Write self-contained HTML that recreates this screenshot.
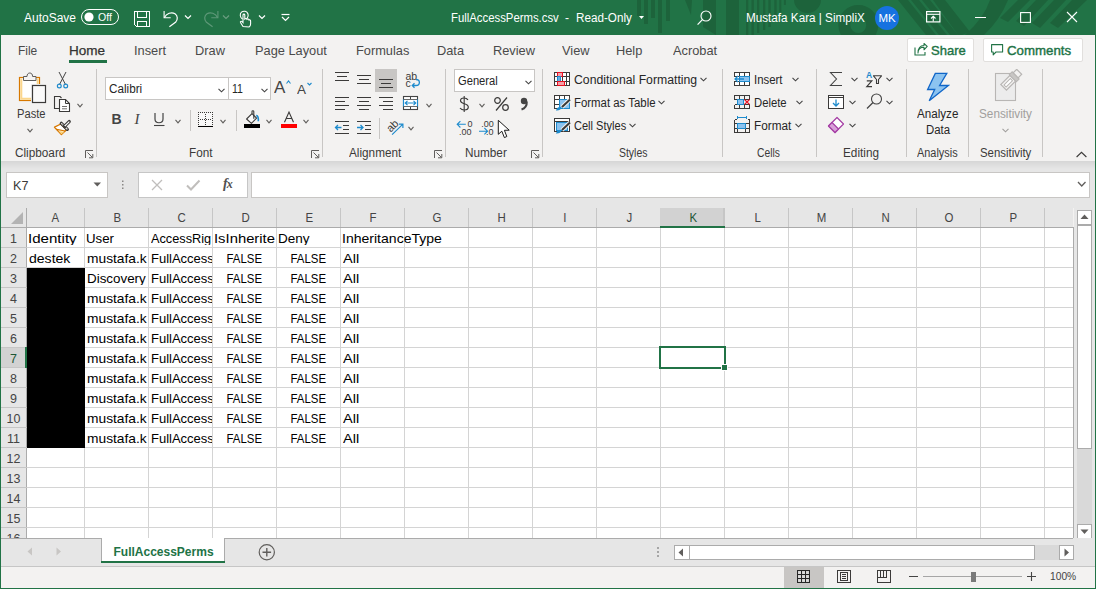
<!DOCTYPE html>
<html><head><meta charset="utf-8"><style>
html,body{margin:0;padding:0;}
body{width:1096px;height:589px;overflow:hidden;position:relative;background:#f3f2f1;font-family:"Liberation Sans", sans-serif;}
svg{display:block;}
</style></head><body>
<svg style="position:absolute;left:0px;top:0px;" width="1096" height="35" viewBox="0 0 1096 35">
<rect x="0" y="0" width="1096" height="35" fill="#217346"/>
<g fill="#1d633b">
<rect x="637" y="0" width="4" height="16"/>
<rect x="644" y="0" width="4" height="24"/>
<rect x="651" y="0" width="4" height="18"/>
<rect x="658" y="0" width="4" height="33"/>
<rect x="666" y="0" width="4" height="21"/>
<polygon points="685,0 692,0 691,15"/>
<polygon points="703,0 716,0 716,35 703,27"/>
<rect x="726" y="0" width="13" height="35"/>
<rect x="746" y="0" width="2.3" height="35"/>
<rect x="751.5" y="0" width="2.3" height="35"/>
<rect x="757" y="0" width="2.3" height="33"/>
<rect x="763" y="0" width="2.3" height="30"/>
<rect x="768.4" y="0" width="2.3" height="27"/>
<rect x="774.3" y="0" width="2.3" height="20"/>
<rect x="779.3" y="0" width="2" height="12"/>
<rect x="783.9" y="0" width="2" height="5"/>
<circle cx="807.5" cy="-0.5" r="13.5"/>
<polygon points="898,0 908,0 936,35 926,35"/>
<polygon points="911,0 919,0 947,35 939,35"/>
<polygon points="922,0 930,0 958,35 950,35"/>
<polygon points="933,0 945,0 970,32 962,35 958,35"/>
<path d="M990,0 L1008,0 Q1000,20 984,35 L965,35 Q984,18 990,0Z"/>
<polygon points="1018,0 1030,0 1008,22 1000,18"/>
<polygon points="1036,0 1048,0 1024,26 1016,21"/>
<polygon points="1054,0 1066,0 1040,28 1032,23"/>
<polygon points="1072,0 1087,0 1058,28 1050,23"/>
</g>
<circle cx="858.3" cy="25" r="14" fill="none" stroke="#1d633b" stroke-width="12"/>
</svg><div style="position:absolute;left:24px;top:11.84px;font-size:12px;line-height:12px;color:#fff;font-weight:400;white-space:pre;">AutoSave</div><svg style="position:absolute;left:81px;top:9px;" width="38" height="16" viewBox="0 0 38 16"><rect x="0.5" y="0.5" width="37" height="15" rx="7.5" fill="none" stroke="#fff" stroke-width="1"/><circle cx="8" cy="8" r="4.6" fill="#fff"/><text x="17" y="12" font-size="10.5" fill="#fff" font-family="Liberation Sans">Off</text></svg><svg style="position:absolute;left:134px;top:11px;" width="17" height="17" viewBox="0 0 17 17"><g fill="none" stroke="#fff" stroke-width="1.1" shape-rendering="crispEdges"><path d="M0.5,0.5 H15.5 V15.5 H2.5 L0.5,13.5 Z"/><path d="M3.5,0.5 V6.5 H12.5 V0.5"/><path d="M3.5,15.5 V10.5 H12.5 V15.5"/></g></svg><svg style="position:absolute;left:162px;top:10px;" width="18" height="18" viewBox="0 0 18 18"><path d="M2.1,1 V7.8 H8.7" fill="none" stroke="#fff" stroke-width="1.1"/><path d="M2.4,7.6 C4.5,3.5 9.5,1.5 13,3.8 C16,5.8 15.8,9.5 13.8,12 L7.4,16.7" fill="none" stroke="#fff" stroke-width="1.2"/></svg><svg style="position:absolute;left:184px;top:14px;" width="8" height="6" viewBox="0 0 8 6"><path d="M1,1.5 L4,4.5 L7,1.5" fill="none" stroke="#fff" stroke-width="1.2"/></svg><svg style="position:absolute;left:202px;top:10px;" width="18" height="18" viewBox="0 0 18 18"><path d="M15.9,1 V7.8 H9.3" fill="none" stroke="#5e9878" stroke-width="1.1"/><path d="M15.6,7.6 C13.5,3.5 8.5,1.5 5,3.8 C2,5.8 2.2,9.5 4.2,12 L10.6,16.7" fill="none" stroke="#5e9878" stroke-width="1.2"/></svg><svg style="position:absolute;left:222px;top:14px;" width="8" height="6" viewBox="0 0 8 6"><path d="M1,1.5 L4,4.5 L7,1.5" fill="none" stroke="#6a9d80" stroke-width="1.2"/></svg><svg style="position:absolute;left:238px;top:10px;" width="14" height="18" viewBox="0 0 14 18"><path d="M4.5,9 C2,7.5 1.5,4 3.5,2.2 C5.5,0.5 9,1 10,4 C10.5,5.5 10,7.5 9,8.5" fill="none" stroke="#fff" stroke-width="1.1"/><path d="M5,16.5 L2.5,12.5 C2,11.5 3.2,10.8 4,11.6 L5,12.6 V5 C5,3.8 6.8,3.8 6.8,5 V9 C7.5,8.3 8.8,8.5 9,9.3 C9.6,8.8 10.9,9 11,10 C11.6,9.7 12.6,10 12.6,11 V14 C12.6,15.5 11.8,16.5 11,17 Z" fill="#217346" stroke="#fff" stroke-width="1.1"/></svg><svg style="position:absolute;left:258px;top:14px;" width="8" height="6" viewBox="0 0 8 6"><path d="M1,1.5 L4,4.5 L7,1.5" fill="none" stroke="#fff" stroke-width="1.2"/></svg><svg style="position:absolute;left:281px;top:13px;" width="9" height="9" viewBox="0 0 9 9"><path d="M0.5,1.5 H8.5" stroke="#fff" stroke-width="1.2"/><path d="M1,4 L4.5,7.5 L8,4" fill="none" stroke="#fff" stroke-width="1.2"/></svg><div style="position:absolute;left:451px;top:11.84px;font-size:12px;line-height:12px;color:#fff;font-weight:400;white-space:pre;transform:scaleX(0.945);transform-origin:0 0;">FullAccessPerms.csv</div><div style="position:absolute;left:565px;top:11.84px;font-size:12px;line-height:12px;color:#fff;font-weight:400;white-space:pre;">-</div><div style="position:absolute;left:576px;top:11.84px;font-size:12px;line-height:12px;color:#fff;font-weight:400;white-space:pre;transform:scaleX(0.975);transform-origin:0 0;">Read-Only</div><svg style="position:absolute;left:639px;top:16px;" width="6" height="4" viewBox="0 0 6 4"><path d="M0,0 H5 L2.5,3Z" fill="#fff"/></svg><svg style="position:absolute;left:697px;top:9px;" width="17" height="17" viewBox="0 0 17 17"><circle cx="9" cy="7" r="5" fill="none" stroke="#fff" stroke-width="1.1"/><path d="M5.4,10.6 L0.6,15.6" stroke="#fff" stroke-width="1.2"/></svg><div style="position:absolute;left:746px;top:11.84px;font-size:12px;line-height:12px;color:#fff;font-weight:400;white-space:pre;transform:scaleX(0.975);transform-origin:0 0;">Mustafa Kara | SimpliX</div><svg style="position:absolute;left:875px;top:6px;" width="24" height="24" viewBox="0 0 24 24"><circle cx="12" cy="12" r="12" fill="#1672e0"/><text x="12" y="16.2" text-anchor="middle" font-size="11.5" fill="#fff" font-family="Liberation Sans">MK</text></svg><svg style="position:absolute;left:926px;top:11px;" width="15" height="12" viewBox="0 0 15 12"><rect x="0.6" y="0.6" width="13.3" height="10.3" fill="none" stroke="#fff" stroke-width="1.2"/><path d="M0.6,3.3 H13.9" stroke="#fff" stroke-width="1.1"/><path d="M7.25,10.5 V5.5 M5,7.5 L7.25,5.3 L9.5,7.5" fill="none" stroke="#fff" stroke-width="1.1"/></svg><div style="position:absolute;left:975px;top:17px;width:11px;height:1px;background:#fff;"></div><svg style="position:absolute;left:1020px;top:12px;" width="12" height="11" viewBox="0 0 12 11"><rect x="0.6" y="0.6" width="9.8" height="9.8" fill="none" stroke="#fff" stroke-width="1.1"/></svg><svg style="position:absolute;left:1066px;top:11px;" width="12" height="12" viewBox="0 0 12 12"><path d="M1,1 L11,11 M11,1 L1,11" stroke="#fff" stroke-width="1.1"/></svg><div style="position:absolute;left:17.5px;top:44.00px;font-size:13px;line-height:13px;color:#4a4a4a;font-weight:400;white-space:pre;transform:scaleX(0.92);transform-origin:0 0;">File</div><div style="position:absolute;left:69px;top:44.00px;font-size:13px;line-height:13px;color:#333333;font-weight:400;white-space:pre;transform:scaleX(1.04);transform-origin:0 0;-webkit-text-stroke:0.25px #333333;">Home</div><div style="position:absolute;left:133.5px;top:44.00px;font-size:13px;line-height:13px;color:#4a4a4a;font-weight:400;white-space:pre;transform:scaleX(0.985);transform-origin:0 0;">Insert</div><div style="position:absolute;left:194.5px;top:44.00px;font-size:13px;line-height:13px;color:#4a4a4a;font-weight:400;white-space:pre;transform:scaleX(0.985);transform-origin:0 0;">Draw</div><div style="position:absolute;left:254.5px;top:44.00px;font-size:13px;line-height:13px;color:#4a4a4a;font-weight:400;white-space:pre;transform:scaleX(0.985);transform-origin:0 0;">Page Layout</div><div style="position:absolute;left:355.5px;top:44.00px;font-size:13px;line-height:13px;color:#4a4a4a;font-weight:400;white-space:pre;transform:scaleX(0.985);transform-origin:0 0;">Formulas</div><div style="position:absolute;left:436.5px;top:44.00px;font-size:13px;line-height:13px;color:#4a4a4a;font-weight:400;white-space:pre;transform:scaleX(0.985);transform-origin:0 0;">Data</div><div style="position:absolute;left:492.5px;top:44.00px;font-size:13px;line-height:13px;color:#4a4a4a;font-weight:400;white-space:pre;transform:scaleX(0.985);transform-origin:0 0;">Review</div><div style="position:absolute;left:561.5px;top:44.00px;font-size:13px;line-height:13px;color:#4a4a4a;font-weight:400;white-space:pre;transform:scaleX(0.985);transform-origin:0 0;">View</div><div style="position:absolute;left:615.5px;top:44.00px;font-size:13px;line-height:13px;color:#4a4a4a;font-weight:400;white-space:pre;transform:scaleX(0.985);transform-origin:0 0;">Help</div><div style="position:absolute;left:672.5px;top:44.00px;font-size:13px;line-height:13px;color:#4a4a4a;font-weight:400;white-space:pre;transform:scaleX(0.985);transform-origin:0 0;">Acrobat</div><div style="position:absolute;left:69px;top:60px;width:38px;height:3px;background:#217346;"></div><div style="position:absolute;left:907px;top:38px;width:67px;height:24px;background:#fff;border:1px solid #e1dfdd;border-radius:2px;box-sizing:border-box;"></div><svg style="position:absolute;left:914px;top:43px;" width="14" height="13" viewBox="0 0 14 13"><path d="M1,4.5 V12 H11 V9" fill="none" stroke="#217346" stroke-width="1.1"/><path d="M4,10 C4,6 6.5,4.3 10,4.3 V6.8 L13.2,3.4 L10,0.5 V2.6 C6,2.8 4,5.5 4,10Z" fill="none" stroke="#217346" stroke-width="1.05" stroke-linejoin="round"/></svg><div style="position:absolute;left:931px;top:44.00px;font-size:13px;line-height:13px;color:#217346;font-weight:400;white-space:pre;-webkit-text-stroke:0.4px #217346;">Share</div><div style="position:absolute;left:983px;top:38px;width:100px;height:24px;background:#fff;border:1px solid #e1dfdd;border-radius:2px;box-sizing:border-box;"></div><svg style="position:absolute;left:991px;top:44px;" width="13" height="12" viewBox="0 0 13 12"><path d="M0.6,0.6 H11.6 V8 H5 L2.2,10.8 V8 H0.6 Z" fill="none" stroke="#217346" stroke-width="1.1" stroke-linejoin="round"/></svg><div style="position:absolute;left:1007px;top:44.00px;font-size:13px;line-height:13px;color:#217346;font-weight:400;white-space:pre;transform:scaleX(1.02);transform-origin:0 0;-webkit-text-stroke:0.4px #217346;">Comments</div><div style="position:absolute;left:96px;top:69px;width:1px;height:88px;background:#c8c6c4;"></div><div style="position:absolute;left:322px;top:69px;width:1px;height:88px;background:#c8c6c4;"></div><div style="position:absolute;left:445px;top:69px;width:1px;height:88px;background:#c8c6c4;"></div><div style="position:absolute;left:542px;top:69px;width:1px;height:88px;background:#c8c6c4;"></div><div style="position:absolute;left:722px;top:69px;width:1px;height:88px;background:#c8c6c4;"></div><div style="position:absolute;left:816px;top:69px;width:1px;height:88px;background:#c8c6c4;"></div><div style="position:absolute;left:906px;top:69px;width:1px;height:88px;background:#c8c6c4;"></div><div style="position:absolute;left:968px;top:69px;width:1px;height:88px;background:#c8c6c4;"></div><div style="position:absolute;left:1042px;top:69px;width:1px;height:88px;background:#c8c6c4;"></div><div style="position:absolute;left:15.0px;top:146.84px;font-size:12px;line-height:12px;color:#3b3a39;font-weight:400;white-space:pre;transform:scaleX(0.98);transform-origin:0 0;">Clipboard</div><div style="position:absolute;left:188.5px;top:146.84px;font-size:12px;line-height:12px;color:#3b3a39;font-weight:400;white-space:pre;transform:scaleX(0.98);transform-origin:0 0;">Font</div><div style="position:absolute;left:348.5px;top:146.84px;font-size:12px;line-height:12px;color:#3b3a39;font-weight:400;white-space:pre;transform:scaleX(0.98);transform-origin:0 0;">Alignment</div><div style="position:absolute;left:465.0px;top:146.84px;font-size:12px;line-height:12px;color:#3b3a39;font-weight:400;white-space:pre;transform:scaleX(0.98);transform-origin:0 0;">Number</div><div style="position:absolute;left:618.5px;top:146.84px;font-size:12px;line-height:12px;color:#3b3a39;font-weight:400;white-space:pre;transform:scaleX(0.87);transform-origin:0 0;">Styles</div><div style="position:absolute;left:757.0px;top:146.84px;font-size:12px;line-height:12px;color:#3b3a39;font-weight:400;white-space:pre;transform:scaleX(0.86);transform-origin:0 0;">Cells</div><div style="position:absolute;left:843.0px;top:146.84px;font-size:12px;line-height:12px;color:#3b3a39;font-weight:400;white-space:pre;transform:scaleX(0.98);transform-origin:0 0;">Editing</div><div style="position:absolute;left:916.5px;top:146.84px;font-size:12px;line-height:12px;color:#3b3a39;font-weight:400;white-space:pre;transform:scaleX(0.91);transform-origin:0 0;">Analysis</div><div style="position:absolute;left:980.0px;top:146.84px;font-size:12px;line-height:12px;color:#3b3a39;font-weight:400;white-space:pre;transform:scaleX(0.95);transform-origin:0 0;">Sensitivity</div><svg style="position:absolute;left:85px;top:150px;" width="9" height="9" viewBox="0 0 9 9"><path d="M0.5,8 V0.5 H8" fill="none" stroke="#605e5c" stroke-width="1"/><path d="M2.5,2.5 L7.5,7.5 M7.8,4 V7.8 H4" fill="none" stroke="#605e5c" stroke-width="1"/></svg><svg style="position:absolute;left:311px;top:150px;" width="9" height="9" viewBox="0 0 9 9"><path d="M0.5,8 V0.5 H8" fill="none" stroke="#605e5c" stroke-width="1"/><path d="M2.5,2.5 L7.5,7.5 M7.8,4 V7.8 H4" fill="none" stroke="#605e5c" stroke-width="1"/></svg><svg style="position:absolute;left:434px;top:150px;" width="9" height="9" viewBox="0 0 9 9"><path d="M0.5,8 V0.5 H8" fill="none" stroke="#605e5c" stroke-width="1"/><path d="M2.5,2.5 L7.5,7.5 M7.8,4 V7.8 H4" fill="none" stroke="#605e5c" stroke-width="1"/></svg><svg style="position:absolute;left:531px;top:150px;" width="9" height="9" viewBox="0 0 9 9"><path d="M0.5,8 V0.5 H8" fill="none" stroke="#605e5c" stroke-width="1"/><path d="M2.5,2.5 L7.5,7.5 M7.8,4 V7.8 H4" fill="none" stroke="#605e5c" stroke-width="1"/></svg><svg style="position:absolute;left:18px;top:72px;" width="30" height="32" viewBox="0 0 30 32">
<rect x="1.5" y="5.5" width="20" height="23" fill="#fff" stroke="#d77800" stroke-width="1.2"/>
<path d="M3.3,6.6 V26.7 H19.7 V6.6" fill="none" stroke="#fbd68c" stroke-width="2"/>
<path d="M5.5,8.5 V4.5 H9 C9,2.2 10.2,1 11.8,1 C13.4,1 14.6,2.2 14.6,4.5 H18 V8.5 Z" fill="#f3f2f1" stroke="#605e5c" stroke-width="1"/>
<rect x="14.5" y="13.5" width="13" height="17" fill="#fff" stroke="#f3f2f1" stroke-width="3"/><rect x="14.5" y="13.5" width="13" height="17" fill="#fafafa" stroke="#3b3a39" stroke-width="1.2"/>
</svg><div style="position:absolute;left:16.5px;top:107.54px;font-size:12px;line-height:12px;color:#3b3a39;font-weight:400;white-space:pre;transform:scaleX(0.93);transform-origin:0 0;">Paste</div><svg style="position:absolute;left:26.5px;top:127.5px;" width="6" height="5" viewBox="0 0 6 5"><path d="M0.5,0.8 L3.0,3.8 L5.5,0.8" fill="none" stroke="#605e5c" stroke-width="1.1"/></svg><svg style="position:absolute;left:56px;top:71px;" width="13" height="18" viewBox="0 0 13 18">
<path d="M3.5,13.5 L10,1 M9.5,13.5 L3,1" fill="none" stroke="#444" stroke-width="1"/>
<circle cx="3.3" cy="15" r="1.9" fill="none" stroke="#1e8bcd" stroke-width="1.2"/>
<circle cx="9.7" cy="15" r="1.9" fill="none" stroke="#1e8bcd" stroke-width="1.2"/>
</svg><svg style="position:absolute;left:53px;top:95px;" width="18" height="18" viewBox="0 0 18 18">
<path d="M8.5,13.5 H1.5 V1.5 H7 L8.5,3" fill="none" stroke="#3b3a39" stroke-width="1.1"/>
<path d="M6.5,4.5 H12.5 L16.5,8.5 V16.5 H6.5 Z" fill="#fff" stroke="#3b3a39" stroke-width="1.1"/>
<path d="M12.5,4.5 V8.5 H16.5" fill="none" stroke="#3b3a39" stroke-width="1"/>
<path d="M9,11.5 H14 M9,13.8 H14" stroke="#605e5c" stroke-width="0.9"/>
</svg><svg style="position:absolute;left:76.5px;top:102.5px;" width="6" height="5" viewBox="0 0 6 5"><path d="M0.5,0.8 L3.0,3.8 L5.5,0.8" fill="none" stroke="#605e5c" stroke-width="1.1"/></svg><svg style="position:absolute;left:53px;top:119px;" width="19" height="17" viewBox="0 0 19 17">
<path d="M1.5,8.2 L7.8,5 L13.5,10.7 L8.4,15.6 Z" fill="#fff" stroke="#d77800" stroke-width="1.3" stroke-linejoin="round"/>
<path d="M5.5,12 L11.5,12.7 L8.4,15.2 Z" fill="#f9d27a"/>
<path d="M3.5,10.3 L12.3,12" stroke="#d77800" stroke-width="1.2"/>
<path d="M8.3,4.3 L14.3,10.3" stroke="#3b3a39" stroke-width="3.3" stroke-linecap="round"/>
<path d="M8.6,4.6 L14,10" stroke="#fff" stroke-width="1.1" stroke-linecap="round"/>
<path d="M11.6,7.2 L16.2,2.6" stroke="#3b3a39" stroke-width="3.3" stroke-linecap="round"/>
<path d="M11.8,7 L16,2.8" stroke="#fff" stroke-width="1.1" stroke-linecap="round"/>
<path d="M9.6,5.6 L13.2,9.2" stroke="#3b3a39" stroke-width="1"/>
</svg><div style="position:absolute;left:105px;top:77px;width:124px;height:23px;background:#fff;border:1px solid #c8c6c4;box-sizing:border-box;"></div><div style="position:absolute;left:108.5px;top:82.84px;font-size:12px;line-height:12px;color:#262626;font-weight:400;white-space:pre;transform:scaleX(0.975);transform-origin:0 0;">Calibri</div><svg style="position:absolute;left:218px;top:87.5px;" width="7" height="5" viewBox="0 0 7 5"><path d="M0.5,0.8 L3.5,3.8 L6.5,0.8" fill="none" stroke="#444" stroke-width="1.1"/></svg><div style="position:absolute;left:228px;top:77px;width:43px;height:23px;background:#fff;border:1px solid #c8c6c4;box-sizing:border-box;"></div><div style="position:absolute;left:231.5px;top:82.84px;font-size:12px;line-height:12px;color:#262626;font-weight:400;white-space:pre;transform:scaleX(0.88);transform-origin:0 0;">11</div><svg style="position:absolute;left:261px;top:87.5px;" width="7" height="5" viewBox="0 0 7 5"><path d="M0.5,0.8 L3.5,3.8 L6.5,0.8" fill="none" stroke="#444" stroke-width="1.1"/></svg><svg style="position:absolute;left:274px;top:79px;" width="18" height="16" viewBox="0 0 18 16"><text x="0" y="14" font-size="17" fill="#444" font-family="Liberation Sans">A</text><path d="M12.5,4.5 L14.5,2 L16.5,4.5" fill="none" stroke="#1e8bcd" stroke-width="1.1"/></svg><svg style="position:absolute;left:297px;top:82px;" width="17" height="13" viewBox="0 0 17 13"><text x="0" y="11.5" font-size="13.5" fill="#444" font-family="Liberation Sans">A</text><path d="M10.5,1 L12.5,3 L14.5,1" fill="none" stroke="#1e8bcd" stroke-width="1.1"/></svg><div style="position:absolute;left:111.5px;top:112.15px;font-size:14px;line-height:14px;color:#444;font-weight:700;white-space:pre;">B</div><div style="position:absolute;left:134.5px;top:112.15px;font-size:14px;line-height:14px;color:#444;font-weight:400;white-space:pre;font-style:italic;font-family:'Liberation Serif';font-size:15px;">I</div><svg style="position:absolute;left:153px;top:112px;" width="13" height="15" viewBox="0 0 13 15"><path d="M2,1 V7 C2,12 10,12 10,7 V1" fill="none" stroke="#444" stroke-width="1.2"/><path d="M1,13.5 H11.5" stroke="#444" stroke-width="1.1"/></svg><svg style="position:absolute;left:175px;top:118.5px;" width="6" height="5" viewBox="0 0 6 5"><path d="M0.5,0.8 L3.0,3.8 L5.5,0.8" fill="none" stroke="#605e5c" stroke-width="1.1"/></svg><div style="position:absolute;left:190px;top:110px;width:1px;height:21px;background:#c8c6c4;"></div><div style="position:absolute;left:199px;top:113px;width:13px;height:12px;background:#f8f8f8;"></div><svg style="position:absolute;left:197px;top:111px;" width="17" height="18" viewBox="0 0 17 18"><g fill="#3b3a39" shape-rendering="crispEdges"><rect x="1" y="1" width="1" height="1"/><rect x="3" y="1" width="1" height="1"/><rect x="5" y="1" width="1" height="1"/><rect x="7" y="1" width="1" height="1"/><rect x="9" y="1" width="1" height="1"/><rect x="11" y="1" width="1" height="1"/><rect x="13" y="1" width="1" height="1"/><rect x="15" y="1" width="1" height="1"/><rect x="1" y="3" width="1" height="1"/><rect x="15" y="3" width="1" height="1"/><rect x="1" y="5" width="1" height="1"/><rect x="15" y="5" width="1" height="1"/><rect x="1" y="7" width="1" height="1"/><rect x="15" y="7" width="1" height="1"/><rect x="1" y="9" width="1" height="1"/><rect x="15" y="9" width="1" height="1"/><rect x="1" y="11" width="1" height="1"/><rect x="15" y="11" width="1" height="1"/><rect x="1" y="13" width="1" height="1"/><rect x="15" y="13" width="1" height="1"/><rect x="8" y="3" width="1" height="1"/><rect x="8" y="5" width="1" height="1"/><rect x="8" y="7" width="1" height="1"/><rect x="8" y="9" width="1" height="1"/><rect x="8" y="11" width="1" height="1"/><rect x="8" y="13" width="1" height="1"/><rect x="3" y="8" width="1" height="1"/><rect x="5" y="8" width="1" height="1"/><rect x="7" y="8" width="1" height="1"/><rect x="9" y="8" width="1" height="1"/><rect x="11" y="8" width="1" height="1"/><rect x="13" y="8" width="1" height="1"/></g><rect x="1" y="15" width="15" height="1" fill="#000" shape-rendering="crispEdges"/></svg><svg style="position:absolute;left:220px;top:118.5px;" width="6" height="5" viewBox="0 0 6 5"><path d="M0.5,0.8 L3.0,3.8 L5.5,0.8" fill="none" stroke="#605e5c" stroke-width="1.1"/></svg><div style="position:absolute;left:236px;top:110px;width:1px;height:21px;background:#c8c6c4;"></div><svg style="position:absolute;left:243px;top:109px;" width="18" height="20" viewBox="0 0 18 20">
<path d="M3.6,10 L9,4.6 L13.6,9.2 L8.4,14.4 Z" fill="#fafafa" stroke="#3b3a39" stroke-width="1.1" stroke-linejoin="round"/>
<path d="M9,4.6 V2.6 C9,1.4 10.8,1.4 10.8,2.6 V9.8" fill="none" stroke="#3b3a39" stroke-width="1.1"/>
<path d="M13.2,6.6 C14.8,6.4 15.6,8.5 15.3,12.3" fill="none" stroke="#1e8bcd" stroke-width="1.6"/>
<rect x="1" y="15" width="16" height="4" fill="#000"/>
</svg><svg style="position:absolute;left:266px;top:118.5px;" width="6" height="5" viewBox="0 0 6 5"><path d="M0.5,0.8 L3.0,3.8 L5.5,0.8" fill="none" stroke="#605e5c" stroke-width="1.1"/></svg><svg style="position:absolute;left:281px;top:110px;" width="17" height="19" viewBox="0 0 17 19">
<path d="M3.5,12.3 L8,2 L12.5,12.3 M5.3,8.5 H10.7" fill="none" stroke="#3b3a39" stroke-width="1.1"/>
<rect x="0" y="14" width="16" height="4" fill="#ff0000"/>
</svg><svg style="position:absolute;left:303px;top:118.5px;" width="6" height="5" viewBox="0 0 6 5"><path d="M0.5,0.8 L3.0,3.8 L5.5,0.8" fill="none" stroke="#605e5c" stroke-width="1.1"/></svg><div style="position:absolute;left:335px;top:72px;width:14px;height:1px;background:#3b3a39;"></div><div style="position:absolute;left:337px;top:76px;width:10px;height:1px;background:#3b3a39;"></div><div style="position:absolute;left:335px;top:80px;width:14px;height:1px;background:#3b3a39;"></div><div style="position:absolute;left:357px;top:75px;width:14px;height:1px;background:#3b3a39;"></div><div style="position:absolute;left:359px;top:79px;width:10px;height:1px;background:#3b3a39;"></div><div style="position:absolute;left:357px;top:83px;width:14px;height:1px;background:#3b3a39;"></div><div style="position:absolute;left:375px;top:69px;width:22px;height:23px;background:#c8c6c4;"></div><div style="position:absolute;left:379px;top:79px;width:14px;height:1px;background:#3b3a39;"></div><div style="position:absolute;left:381px;top:83px;width:10px;height:1px;background:#3b3a39;"></div><div style="position:absolute;left:379px;top:87px;width:14px;height:1px;background:#3b3a39;"></div><svg style="position:absolute;left:403px;top:71px;" width="19" height="19" viewBox="0 0 19 19"><text x="2.5" y="8.5" font-size="10.5" fill="#3b3a39" font-family="Liberation Sans">ab</text><text x="2.5" y="15.5" font-size="10.5" fill="#3b3a39" font-family="Liberation Sans">c</text><path d="M13,8.5 C17.5,8.5 17.5,14.5 13,14.5 H9.5 M11.5,12.3 L9.3,14.5 L11.5,16.7" fill="none" stroke="#1e8bcd" stroke-width="1.3"/></svg><div style="position:absolute;left:335px;top:97px;width:14px;height:1px;background:#3b3a39;"></div><div style="position:absolute;left:335px;top:101px;width:10px;height:1px;background:#3b3a39;"></div><div style="position:absolute;left:335px;top:105px;width:14px;height:1px;background:#3b3a39;"></div><div style="position:absolute;left:335px;top:109px;width:10px;height:1px;background:#3b3a39;"></div><div style="position:absolute;left:357px;top:97px;width:14px;height:1px;background:#3b3a39;"></div><div style="position:absolute;left:359px;top:101px;width:10px;height:1px;background:#3b3a39;"></div><div style="position:absolute;left:357px;top:105px;width:14px;height:1px;background:#3b3a39;"></div><div style="position:absolute;left:359px;top:109px;width:10px;height:1px;background:#3b3a39;"></div><div style="position:absolute;left:379px;top:97px;width:14px;height:1px;background:#3b3a39;"></div><div style="position:absolute;left:383px;top:101px;width:10px;height:1px;background:#3b3a39;"></div><div style="position:absolute;left:379px;top:105px;width:14px;height:1px;background:#3b3a39;"></div><div style="position:absolute;left:383px;top:109px;width:10px;height:1px;background:#3b3a39;"></div><svg style="position:absolute;left:402px;top:95px;" width="18" height="17" viewBox="0 0 18 17">
<rect x="1.5" y="1.5" width="14" height="13" fill="#fff" stroke="#444" stroke-width="1.1"/>
<path d="M1.5,4.5 H15.5 M1.5,11.5 H15.5 M8.5,1.5 V4.5 M8.5,11.5 V14.5" stroke="#444" stroke-width="1"/>
<rect x="1.8" y="4.8" width="13.4" height="6.4" fill="#fff"/>
<path d="M3.2,8 H13.8 M5.5,5.8 L3.2,8 L5.5,10.2 M11.5,5.8 L13.8,8 L11.5,10.2" fill="none" stroke="#1e8bcd" stroke-width="1.1"/>
<path d="M1.5,4.5 V11.5 M15.5,4.5 V11.5" stroke="#1e8bcd" stroke-width="1.1"/>
</svg><svg style="position:absolute;left:425.5px;top:102.5px;" width="6" height="5" viewBox="0 0 6 5"><path d="M0.5,0.8 L3.0,3.8 L5.5,0.8" fill="none" stroke="#605e5c" stroke-width="1.1"/></svg><div style="position:absolute;left:335px;top:121px;width:14px;height:1px;background:#3b3a39;"></div><div style="position:absolute;left:343px;top:125px;width:6px;height:1px;background:#3b3a39;"></div><div style="position:absolute;left:343px;top:129px;width:6px;height:1px;background:#3b3a39;"></div><div style="position:absolute;left:335px;top:133px;width:14px;height:1px;background:#3b3a39;"></div><div style="position:absolute;left:357px;top:121px;width:14px;height:1px;background:#3b3a39;"></div><div style="position:absolute;left:365px;top:125px;width:6px;height:1px;background:#3b3a39;"></div><div style="position:absolute;left:365px;top:129px;width:6px;height:1px;background:#3b3a39;"></div><div style="position:absolute;left:357px;top:133px;width:14px;height:1px;background:#3b3a39;"></div><svg style="position:absolute;left:334px;top:123px;" width="9" height="9" viewBox="0 0 9 9"><path d="M1.5,4.5 H7.5 M4,2 L1.5,4.5 L4,7" fill="none" stroke="#1e8bcd" stroke-width="1.3"/></svg><svg style="position:absolute;left:356px;top:123px;" width="9" height="9" viewBox="0 0 9 9"><path d="M1,4.5 H7 M4.5,2 L7,4.5 L4.5,7" fill="none" stroke="#1e8bcd" stroke-width="1.3"/></svg><div style="position:absolute;left:379px;top:118px;width:1px;height:21px;background:#c8c6c4;"></div><svg style="position:absolute;left:386px;top:116px;" width="20" height="22" viewBox="0 0 20 22"><text x="6.5" y="13.5" text-anchor="middle" font-size="11" fill="#3b3a39" font-family="Liberation Sans" transform="rotate(-45 6.5 10)">ab</text><path d="M6.1,18.6 L16.9,8.1 M13,8.1 H16.9 V12" fill="none" stroke="#1e8bcd" stroke-width="1.2"/></svg><svg style="position:absolute;left:407.5px;top:125.8px;" width="6" height="5" viewBox="0 0 6 5"><path d="M0.5,0.8 L3.0,3.8 L5.5,0.8" fill="none" stroke="#605e5c" stroke-width="1.1"/></svg><div style="position:absolute;left:454px;top:69px;width:81px;height:23px;background:#fff;border:1px solid #c8c6c4;box-sizing:border-box;"></div><div style="position:absolute;left:457.5px;top:74.84px;font-size:12px;line-height:12px;color:#262626;font-weight:400;white-space:pre;transform:scaleX(0.93);transform-origin:0 0;">General</div><svg style="position:absolute;left:525px;top:79.5px;" width="7" height="5" viewBox="0 0 7 5"><path d="M0.5,0.8 L3.5,3.8 L6.5,0.8" fill="none" stroke="#444" stroke-width="1.1"/></svg><svg style="position:absolute;left:459px;top:96px;" width="11" height="16" viewBox="0 0 11 16"><path d="M9,3.8 C8,2.5 6.8,2 5,2 C2.8,2 1.5,3.2 1.5,4.8 C1.5,8.5 9.3,7 9.3,11 C9.3,12.8 7.8,14 5.3,14 C3.3,14 2,13.3 1,12" fill="none" stroke="#3b3a39" stroke-width="1.2"/><path d="M5.2,0 V16" stroke="#3b3a39" stroke-width="1.1"/></svg><svg style="position:absolute;left:479px;top:102.5px;" width="6" height="5" viewBox="0 0 6 5"><path d="M0.5,0.8 L3.0,3.8 L5.5,0.8" fill="none" stroke="#605e5c" stroke-width="1.1"/></svg><svg style="position:absolute;left:493px;top:96px;" width="17" height="16" viewBox="0 0 17 16"><circle cx="4.5" cy="4.5" r="2.8" fill="none" stroke="#3b3a39" stroke-width="1.2"/><circle cx="12.5" cy="11.5" r="2.8" fill="none" stroke="#3b3a39" stroke-width="1.2"/><path d="M14,1.5 L3,14.5" stroke="#3b3a39" stroke-width="1.2"/></svg><svg style="position:absolute;left:519px;top:97px;" width="10" height="14" viewBox="0 0 10 14"><circle cx="5" cy="4" r="3.2" fill="#444"/><path d="M7.8,4.5 C8,8.5 5.5,11.5 2.5,12.5" fill="none" stroke="#444" stroke-width="2"/></svg><svg style="position:absolute;left:456px;top:119px;" width="18" height="18" viewBox="0 0 18 18"><g font-size="9" fill="#3b3a39" font-family="Liberation Sans"><text x="11.4" y="7.6">0</text><text x="3" y="15.7">.00</text></g><path d="M1.2,5.3 H9.8 M4.4,2.1 L1.2,5.3 L4.4,8.5" fill="none" stroke="#1e8bcd" stroke-width="1.1"/></svg><svg style="position:absolute;left:478px;top:119px;" width="18" height="18" viewBox="0 0 18 18"><g font-size="9" fill="#3b3a39" font-family="Liberation Sans"><text x="3.3" y="7.6">.00</text><text x="8" y="15.7">.0</text></g><path d="M1,12.2 H9.6 M6.4,9 L9.6,12.2 L6.4,15.4" fill="none" stroke="#1e8bcd" stroke-width="1.1"/></svg><svg style="position:absolute;left:497px;top:119px;" width="15" height="21" viewBox="0 0 15 21"><path d="M1.3,1.3 V15.3 L4.8,12.2 L7.4,18.6 L9.8,17.5 L7.4,11.3 L12.2,11.2 Z" fill="#fff" stroke="#1a1a1a" stroke-width="1" stroke-linejoin="miter"/></svg><svg style="position:absolute;left:553px;top:71px;" width="18" height="16" viewBox="0 0 18 16">
<g shape-rendering="crispEdges">
<rect x="1.5" y="1.5" width="15" height="13" fill="#fff" stroke="#3b3a39" stroke-width="1"/>
<path d="M1.5,5.5 H16.5 M1.5,10.5 H16.5 M4.5,1.5 V14.5 M9.5,1.5 V14.5 M13.5,1.5 V14.5" stroke="#3b3a39" stroke-width="1"/>
<rect x="4.5" y="1.5" width="5" height="4" fill="#f4a0a8" stroke="#e81123" stroke-width="1"/>
<rect x="4.5" y="5.5" width="3" height="5" fill="#66aee3" stroke="#1e8bcd" stroke-width="1"/>
<rect x="4.5" y="10.5" width="7" height="4" fill="#f4a0a8" stroke="#e81123" stroke-width="1"/>
</g>
</svg><div style="position:absolute;left:573.5px;top:73.84px;font-size:12px;line-height:12px;color:#262626;font-weight:400;white-space:pre;transform:scaleX(1.02);transform-origin:0 0;">Conditional Formatting</div><svg style="position:absolute;left:700px;top:77px;" width="7" height="5" viewBox="0 0 7 5"><path d="M0.5,0.8 L3.5,3.8 L6.5,0.8" fill="none" stroke="#444" stroke-width="1.1"/></svg><svg style="position:absolute;left:553px;top:94px;" width="18" height="17" viewBox="0 0 18 17">
<g shape-rendering="crispEdges">
<rect x="1.5" y="1.5" width="15" height="13" fill="#fff" stroke="#3b3a39" stroke-width="1"/>
<path d="M1.5,5.5 H16.5 M1.5,10.5 H16.5 M6.5,1.5 V14.5 M11.5,1.5 V14.5" stroke="#3b3a39" stroke-width="1"/>
<rect x="6.5" y="5.5" width="10" height="9" fill="#8cc3f0" stroke="#1e8bcd" stroke-width="1"/>
</g>
<path d="M17,5.5 L9,13" stroke="#f3f2f1" stroke-width="4"/>
<path d="M17,5.5 L9,13" stroke="#3b3a39" stroke-width="2"/>
<path d="M3,16.5 C3.5,14 5.5,12.3 8.2,13.2 C8.2,15.5 6,16.8 3,16.5Z" fill="#1e8bcd"/>
</svg><div style="position:absolute;left:573.5px;top:96.84px;font-size:12px;line-height:12px;color:#262626;font-weight:400;white-space:pre;transform:scaleX(0.95);transform-origin:0 0;">Format as Table</div><svg style="position:absolute;left:658px;top:100px;" width="7" height="5" viewBox="0 0 7 5"><path d="M0.5,0.8 L3.5,3.8 L6.5,0.8" fill="none" stroke="#444" stroke-width="1.1"/></svg><svg style="position:absolute;left:553px;top:117px;" width="18" height="17" viewBox="0 0 18 17">
<g shape-rendering="crispEdges">
<rect x="1.5" y="1.5" width="15" height="13" fill="#fff" stroke="#3b3a39" stroke-width="1"/>
<path d="M1.5,4.5 H16.5" stroke="#3b3a39" stroke-width="1"/>
<rect x="3.5" y="5" width="11" height="8" fill="#8cc3f0" stroke="#1e8bcd" stroke-width="1"/>
</g>
<path d="M17,5.5 L9,13" stroke="#f3f2f1" stroke-width="4"/>
<path d="M17,5.5 L9,13" stroke="#3b3a39" stroke-width="2"/>
<path d="M3,16.5 C3.5,14 5.5,12.3 8.2,13.2 C8.2,15.5 6,16.8 3,16.5Z" fill="#1e8bcd"/>
</svg><div style="position:absolute;left:573.5px;top:119.84px;font-size:12px;line-height:12px;color:#262626;font-weight:400;white-space:pre;transform:scaleX(0.92);transform-origin:0 0;">Cell Styles</div><svg style="position:absolute;left:629px;top:123px;" width="7" height="5" viewBox="0 0 7 5"><path d="M0.5,0.8 L3.5,3.8 L6.5,0.8" fill="none" stroke="#444" stroke-width="1.1"/></svg><svg style="position:absolute;left:733px;top:71px;" width="18" height="16" viewBox="0 0 18 16">
<g shape-rendering="crispEdges" fill="none" stroke="#3b3a39" stroke-width="1">
<rect x="1.5" y="1.5" width="15" height="13" fill="#fff"/>
<path d="M1.5,5.5 H16.5 M1.5,10.5 H16.5 M6.5,1.5 V14.5 M11.5,1.5 V14.5"/>
</g>
<rect x="1" y="6" width="5.5" height="4" fill="#fff"/>
<rect x="6.5" y="5.5" width="10" height="5" fill="#8cc3f0" stroke="#1e8bcd" stroke-width="1" shape-rendering="crispEdges"/>
<path d="M2,8 H11 M5,5 L2,8 L5,11" fill="none" stroke="#1e8bcd" stroke-width="1.3"/>
</svg><div style="position:absolute;left:753.5px;top:73.84px;font-size:12px;line-height:12px;color:#262626;font-weight:400;white-space:pre;transform:scaleX(0.95);transform-origin:0 0;">Insert</div><svg style="position:absolute;left:792px;top:77px;" width="7" height="5" viewBox="0 0 7 5"><path d="M0.5,0.8 L3.5,3.8 L6.5,0.8" fill="none" stroke="#444" stroke-width="1.1"/></svg><svg style="position:absolute;left:733px;top:94px;" width="18" height="16" viewBox="0 0 18 16">
<g shape-rendering="crispEdges" fill="none" stroke="#3b3a39" stroke-width="1">
<path d="M1.5,5.5 V1.5 H16.5 V5.5 M1.5,10.5 V14.5 H16.5 V10.5 M1.5,5.5 H16.5 M1.5,10.5 H16.5 M6.5,1.5 V5.5 M11.5,1.5 V5.5 M6.5,10.5 V14.5 M11.5,10.5 V14.5"/>
</g>
<rect x="4.5" y="5.5" width="6" height="5" fill="#8cc3f0" stroke="#1e8bcd" stroke-width="1" shape-rendering="crispEdges"/>
<path d="M11.5,5.5 L16.5,10.5 M16.5,5.5 L11.5,10.5" stroke="#e81123" stroke-width="1.1"/>
</svg><div style="position:absolute;left:753.5px;top:96.84px;font-size:12px;line-height:12px;color:#262626;font-weight:400;white-space:pre;transform:scaleX(0.94);transform-origin:0 0;">Delete</div><svg style="position:absolute;left:796px;top:100px;" width="7" height="5" viewBox="0 0 7 5"><path d="M0.5,0.8 L3.5,3.8 L6.5,0.8" fill="none" stroke="#444" stroke-width="1.1"/></svg><svg style="position:absolute;left:733px;top:116px;" width="18" height="18" viewBox="0 0 18 18">
<g shape-rendering="crispEdges" fill="none" stroke="#3b3a39" stroke-width="1">
<path d="M1.5,3.5 H3.5 M14.5,3.5 H16.5 M1.5,3.5 V16.5 H16.5 V3.5 M1.5,7.5 H16.5 M1.5,12.5 H16.5 M4.5,7.5 V16.5 M12.5,7.5 V16.5"/>
</g>
<rect x="4.5" y="7.5" width="8" height="5" fill="#8cc3f0" stroke="#1e8bcd" stroke-width="1" shape-rendering="crispEdges"/>
<path d="M4.5,1.5 H13.5 M4.5,0 V3 M13.5,0 V3" stroke="#1e8bcd" stroke-width="1" shape-rendering="crispEdges"/>
</svg><div style="position:absolute;left:753.5px;top:119.84px;font-size:12px;line-height:12px;color:#262626;font-weight:400;white-space:pre;transform:scaleX(0.98);transform-origin:0 0;">Format</div><svg style="position:absolute;left:794.5px;top:123px;" width="7" height="5" viewBox="0 0 7 5"><path d="M0.5,0.8 L3.5,3.8 L6.5,0.8" fill="none" stroke="#444" stroke-width="1.1"/></svg><svg style="position:absolute;left:829px;top:71px;" width="14" height="16" viewBox="0 0 14 16"><path d="M13,1.5 H1.5 L7.5,8 L1.5,14.5 H13" fill="none" stroke="#444" stroke-width="1.1"/></svg><svg style="position:absolute;left:850.5px;top:77px;" width="7" height="5" viewBox="0 0 7 5"><path d="M0.5,0.8 L3.5,3.8 L6.5,0.8" fill="none" stroke="#444" stroke-width="1.1"/></svg><svg style="position:absolute;left:865px;top:70px;" width="19" height="18" viewBox="0 0 19 18"><text x="1" y="7.5" font-size="8.5" font-weight="700" fill="#1e8bcd" font-family="Liberation Sans">A</text><path d="M1.8,10.8 H6.8 L1.8,16.6 H7" fill="none" stroke="#3b3a39" stroke-width="1.2"/><path d="M8.5,5.8 H16.5 L13.5,9.5 V13.5 H11.5 V9.5 Z" fill="none" stroke="#3b3a39" stroke-width="1.1" stroke-linejoin="round"/></svg><svg style="position:absolute;left:886px;top:77px;" width="7" height="5" viewBox="0 0 7 5"><path d="M0.5,0.8 L3.5,3.8 L6.5,0.8" fill="none" stroke="#444" stroke-width="1.1"/></svg><svg style="position:absolute;left:827px;top:94px;" width="18" height="16" viewBox="0 0 18 16"><g shape-rendering="crispEdges" fill="none" stroke="#3b3a39"><rect x="1.5" y="1.5" width="15" height="13" fill="#fff"/><path d="M1.5,3.5 H16.5"/></g><path d="M9,5.5 V12 M6,9 L9,12 L12,9" fill="none" stroke="#1e8bcd" stroke-width="1.3"/></svg><svg style="position:absolute;left:848.5px;top:100px;" width="7" height="5" viewBox="0 0 7 5"><path d="M0.5,0.8 L3.5,3.8 L6.5,0.8" fill="none" stroke="#444" stroke-width="1.1"/></svg><svg style="position:absolute;left:866px;top:93px;" width="17" height="17" viewBox="0 0 17 17"><circle cx="10.5" cy="6" r="5" fill="none" stroke="#444" stroke-width="1.1"/><path d="M7,9.5 L1,15.5" stroke="#444" stroke-width="1.3"/></svg><svg style="position:absolute;left:886px;top:100px;" width="7" height="5" viewBox="0 0 7 5"><path d="M0.5,0.8 L3.5,3.8 L6.5,0.8" fill="none" stroke="#444" stroke-width="1.1"/></svg><svg style="position:absolute;left:827px;top:116px;" width="18" height="18" viewBox="0 0 18 18"><path d="M1.5,10 L10,1.5 L16.5,8 L8,16.5 Z" fill="#fff" stroke="#a53ea5" stroke-width="1.2" stroke-linejoin="round"/><path d="M1.5,10 L5,6.5 L11.5,13 L8,16.5 Z" fill="#d9a0d9" stroke="#a53ea5" stroke-width="1.2" stroke-linejoin="round"/></svg><svg style="position:absolute;left:848.5px;top:123px;" width="7" height="5" viewBox="0 0 7 5"><path d="M0.5,0.8 L3.5,3.8 L6.5,0.8" fill="none" stroke="#444" stroke-width="1.1"/></svg><svg style="position:absolute;left:926px;top:72px;" width="24" height="30" viewBox="0 0 24 30"><path d="M9.3,1.4 H20.8 L13.6,13.5 H22.4 L3.2,28.8 L8.7,17.5 H1.6 Z" fill="#8cc3f0" stroke="#1066c8" stroke-width="1.3" stroke-linejoin="miter"/></svg><div style="position:absolute;left:917px;top:107.84px;font-size:12px;line-height:12px;color:#262626;font-weight:400;white-space:pre;transform:scaleX(0.97);transform-origin:0 0;">Analyze</div><div style="position:absolute;left:926px;top:123.84px;font-size:12px;line-height:12px;color:#262626;font-weight:400;white-space:pre;transform:scaleX(0.95);transform-origin:0 0;">Data</div><svg style="position:absolute;left:994px;top:69px;" width="30" height="33" viewBox="0 0 30 33">
<rect x="1.5" y="4.5" width="20" height="27" fill="#ececec" stroke="#b8b6b4" stroke-width="1.1"/>
<g transform="rotate(-45 16 12)">
<rect x="7" y="8" width="13" height="8" fill="#f3f2f1" stroke="#b8b6b4" stroke-width="1.2"/>
<rect x="9" y="10.5" width="9" height="3" fill="#fff" stroke="#b8b6b4" stroke-width="1"/>
<rect x="20" y="7" width="4" height="10" fill="#c8c6c4" stroke="#b8b6b4" stroke-width="1"/>
<rect x="24" y="8.5" width="5" height="7" fill="#f3f2f1" stroke="#b8b6b4" stroke-width="1.2"/>
</g>
</svg><div style="position:absolute;left:979px;top:108.34px;font-size:12px;line-height:12px;color:#a19f9d;font-weight:400;white-space:pre;transform:scaleX(0.98);transform-origin:0 0;">Sensitivity</div><svg style="position:absolute;left:1002px;top:127.5px;" width="7" height="5" viewBox="0 0 7 5"><path d="M0.5,0.8 L3.5,3.8 L6.5,0.8" fill="none" stroke="#a19f9d" stroke-width="1.1"/></svg><svg style="position:absolute;left:1075px;top:151px;" width="13" height="8" viewBox="0 0 13 8"><path d="M1.6,6 L6.5,1.3 L11.4,6" fill="none" stroke="#3b3a39" stroke-width="1.1"/></svg><div style="position:absolute;left:0px;top:161px;width:1096px;height:47px;background:#e6e6e6;"></div><div style="position:absolute;left:0;top:161px;width:1096px;height:8px;background:linear-gradient(#d6d6d6,#e6e6e6);"></div><div style="position:absolute;left:6px;top:172px;width:102px;height:26px;background:#fff;border:1px solid #c8c6c4;box-sizing:border-box;"></div><div style="position:absolute;left:13px;top:179.00px;font-size:13px;line-height:13px;color:#3b3a39;font-weight:400;white-space:pre;transform:scaleX(0.97);transform-origin:0 0;">K7</div><svg style="position:absolute;left:93px;top:182px;" width="9" height="6" viewBox="0 0 9 6"><path d="M0.5,0.5 H8 L4.25,4.5 Z" fill="#605e5c"/></svg><svg style="position:absolute;left:121px;top:180px;" width="4" height="10" viewBox="0 0 4 10"><rect x="1" y="0.5" width="1.5" height="1.5" fill="#8a8886"/><rect x="1" y="4" width="1.5" height="1.5" fill="#8a8886"/><rect x="1" y="7.5" width="1.5" height="1.5" fill="#8a8886"/></svg><div style="position:absolute;left:138px;top:172px;width:110px;height:26px;background:#fff;border:1px solid #c6c6c6;box-sizing:border-box;"></div><svg style="position:absolute;left:151px;top:179px;" width="13" height="12" viewBox="0 0 13 12"><path d="M1,1 L11,11 M11,1 L1,11" stroke="#c0bebc" stroke-width="1.3"/></svg><svg style="position:absolute;left:186px;top:179px;" width="16" height="13" viewBox="0 0 16 13"><path d="M1,6.5 L5,10.5 L13.5,1.5" fill="none" stroke="#c0bebc" stroke-width="2"/></svg><div style="position:absolute;left:223px;top:177px;font-family:'Liberation Serif';font-style:italic;font-weight:700;font-size:14px;line-height:14px;color:#505050;">f<span style="font-size:12px;margin-left:-1px;">x</span></div><div style="position:absolute;left:251px;top:172px;width:839px;height:26px;background:#fff;border:1px solid #c8c6c4;box-sizing:border-box;"></div><svg style="position:absolute;left:1077px;top:181px;" width="10" height="7" viewBox="0 0 10 7"><path d="M1,1 L4.75,5 L8.5,1" fill="none" stroke="#605e5c" stroke-width="1.3"/></svg><div style="position:absolute;left:1px;top:208px;width:1072px;height:330px;background:#fff;"></div><div style="position:absolute;left:1px;top:208px;width:1072px;height:20px;background:#e6e6e6;"></div><div style="position:absolute;left:1px;top:228px;width:26px;height:310px;background:#e6e6e6;"></div><svg style="position:absolute;left:10px;top:211px;" width="15" height="15" viewBox="0 0 15 15"><path d="M13,1 V13 H1 Z" fill="#b3b3b3"/></svg><div style="position:absolute;left:84px;top:228px;width:1px;height:310px;background:#d4d4d4;"></div><div style="position:absolute;left:84px;top:208px;width:1px;height:19px;background:#c6c6c6;"></div><div style="position:absolute;left:148px;top:228px;width:1px;height:310px;background:#d4d4d4;"></div><div style="position:absolute;left:148px;top:208px;width:1px;height:19px;background:#c6c6c6;"></div><div style="position:absolute;left:212px;top:228px;width:1px;height:310px;background:#d4d4d4;"></div><div style="position:absolute;left:212px;top:208px;width:1px;height:19px;background:#c6c6c6;"></div><div style="position:absolute;left:276px;top:228px;width:1px;height:310px;background:#d4d4d4;"></div><div style="position:absolute;left:276px;top:208px;width:1px;height:19px;background:#c6c6c6;"></div><div style="position:absolute;left:340px;top:228px;width:1px;height:310px;background:#d4d4d4;"></div><div style="position:absolute;left:340px;top:208px;width:1px;height:19px;background:#c6c6c6;"></div><div style="position:absolute;left:404px;top:228px;width:1px;height:310px;background:#d4d4d4;"></div><div style="position:absolute;left:404px;top:208px;width:1px;height:19px;background:#c6c6c6;"></div><div style="position:absolute;left:468px;top:228px;width:1px;height:310px;background:#d4d4d4;"></div><div style="position:absolute;left:468px;top:208px;width:1px;height:19px;background:#c6c6c6;"></div><div style="position:absolute;left:532px;top:228px;width:1px;height:310px;background:#d4d4d4;"></div><div style="position:absolute;left:532px;top:208px;width:1px;height:19px;background:#c6c6c6;"></div><div style="position:absolute;left:596px;top:228px;width:1px;height:310px;background:#d4d4d4;"></div><div style="position:absolute;left:596px;top:208px;width:1px;height:19px;background:#c6c6c6;"></div><div style="position:absolute;left:660px;top:228px;width:1px;height:310px;background:#d4d4d4;"></div><div style="position:absolute;left:660px;top:208px;width:1px;height:19px;background:#c6c6c6;"></div><div style="position:absolute;left:724px;top:228px;width:1px;height:310px;background:#d4d4d4;"></div><div style="position:absolute;left:724px;top:208px;width:1px;height:19px;background:#c6c6c6;"></div><div style="position:absolute;left:788px;top:228px;width:1px;height:310px;background:#d4d4d4;"></div><div style="position:absolute;left:788px;top:208px;width:1px;height:19px;background:#c6c6c6;"></div><div style="position:absolute;left:852px;top:228px;width:1px;height:310px;background:#d4d4d4;"></div><div style="position:absolute;left:852px;top:208px;width:1px;height:19px;background:#c6c6c6;"></div><div style="position:absolute;left:916px;top:228px;width:1px;height:310px;background:#d4d4d4;"></div><div style="position:absolute;left:916px;top:208px;width:1px;height:19px;background:#c6c6c6;"></div><div style="position:absolute;left:980px;top:228px;width:1px;height:310px;background:#d4d4d4;"></div><div style="position:absolute;left:980px;top:208px;width:1px;height:19px;background:#c6c6c6;"></div><div style="position:absolute;left:1044px;top:228px;width:1px;height:310px;background:#d4d4d4;"></div><div style="position:absolute;left:1044px;top:208px;width:1px;height:19px;background:#c6c6c6;"></div><div style="position:absolute;left:26px;top:208px;width:1px;height:330px;background:#ababab;"></div><div style="position:absolute;left:27px;top:247px;width:1046px;height:1px;background:#d4d4d4;"></div><div style="position:absolute;left:1px;top:247px;width:26px;height:1px;background:#c6c6c6;"></div><div style="position:absolute;left:27px;top:267px;width:1046px;height:1px;background:#d4d4d4;"></div><div style="position:absolute;left:1px;top:267px;width:26px;height:1px;background:#c6c6c6;"></div><div style="position:absolute;left:27px;top:287px;width:1046px;height:1px;background:#d4d4d4;"></div><div style="position:absolute;left:1px;top:287px;width:26px;height:1px;background:#c6c6c6;"></div><div style="position:absolute;left:27px;top:307px;width:1046px;height:1px;background:#d4d4d4;"></div><div style="position:absolute;left:1px;top:307px;width:26px;height:1px;background:#c6c6c6;"></div><div style="position:absolute;left:27px;top:327px;width:1046px;height:1px;background:#d4d4d4;"></div><div style="position:absolute;left:1px;top:327px;width:26px;height:1px;background:#c6c6c6;"></div><div style="position:absolute;left:27px;top:347px;width:1046px;height:1px;background:#d4d4d4;"></div><div style="position:absolute;left:1px;top:347px;width:26px;height:1px;background:#c6c6c6;"></div><div style="position:absolute;left:27px;top:367px;width:1046px;height:1px;background:#d4d4d4;"></div><div style="position:absolute;left:1px;top:367px;width:26px;height:1px;background:#c6c6c6;"></div><div style="position:absolute;left:27px;top:387px;width:1046px;height:1px;background:#d4d4d4;"></div><div style="position:absolute;left:1px;top:387px;width:26px;height:1px;background:#c6c6c6;"></div><div style="position:absolute;left:27px;top:407px;width:1046px;height:1px;background:#d4d4d4;"></div><div style="position:absolute;left:1px;top:407px;width:26px;height:1px;background:#c6c6c6;"></div><div style="position:absolute;left:27px;top:427px;width:1046px;height:1px;background:#d4d4d4;"></div><div style="position:absolute;left:1px;top:427px;width:26px;height:1px;background:#c6c6c6;"></div><div style="position:absolute;left:27px;top:447px;width:1046px;height:1px;background:#d4d4d4;"></div><div style="position:absolute;left:1px;top:447px;width:26px;height:1px;background:#c6c6c6;"></div><div style="position:absolute;left:27px;top:467px;width:1046px;height:1px;background:#d4d4d4;"></div><div style="position:absolute;left:1px;top:467px;width:26px;height:1px;background:#c6c6c6;"></div><div style="position:absolute;left:27px;top:487px;width:1046px;height:1px;background:#d4d4d4;"></div><div style="position:absolute;left:1px;top:487px;width:26px;height:1px;background:#c6c6c6;"></div><div style="position:absolute;left:27px;top:507px;width:1046px;height:1px;background:#d4d4d4;"></div><div style="position:absolute;left:1px;top:507px;width:26px;height:1px;background:#c6c6c6;"></div><div style="position:absolute;left:27px;top:527px;width:1046px;height:1px;background:#d4d4d4;"></div><div style="position:absolute;left:1px;top:527px;width:26px;height:1px;background:#c6c6c6;"></div><div style="position:absolute;left:27px;top:547px;width:1046px;height:1px;background:#d4d4d4;"></div><div style="position:absolute;left:1px;top:547px;width:26px;height:1px;background:#c6c6c6;"></div><div style="position:absolute;left:1px;top:227px;width:1072px;height:1px;background:#ababab;"></div><div style="position:absolute;left:660px;top:208px;width:64px;height:19px;background:#d2d2d2;"></div><div style="position:absolute;left:723px;top:208px;width:1px;height:19px;background:#c6c6c6;"></div><div style="position:absolute;left:660px;top:226px;width:65px;height:2px;background:#217346;"></div><div style="position:absolute;left:1px;top:348px;width:25px;height:19px;background:#d2d2d2;"></div><div style="position:absolute;left:25px;top:347px;width:2px;height:21px;background:#217346;"></div><div style="position:absolute;left:26.8px;width:58px;top:211.00px;font-size:13px;line-height:13px;text-align:center;color:#444;"><span style="display:inline-block;transform:scaleX(0.88);">A</span></div><div style="position:absolute;left:85.8px;width:63px;top:211.00px;font-size:13px;line-height:13px;text-align:center;color:#444;"><span style="display:inline-block;transform:scaleX(0.88);">B</span></div><div style="position:absolute;left:149.8px;width:63px;top:211.00px;font-size:13px;line-height:13px;text-align:center;color:#444;"><span style="display:inline-block;transform:scaleX(0.88);">C</span></div><div style="position:absolute;left:213.8px;width:63px;top:211.00px;font-size:13px;line-height:13px;text-align:center;color:#444;"><span style="display:inline-block;transform:scaleX(0.88);">D</span></div><div style="position:absolute;left:277.8px;width:63px;top:211.00px;font-size:13px;line-height:13px;text-align:center;color:#444;"><span style="display:inline-block;transform:scaleX(0.88);">E</span></div><div style="position:absolute;left:341.8px;width:63px;top:211.00px;font-size:13px;line-height:13px;text-align:center;color:#444;"><span style="display:inline-block;transform:scaleX(0.88);">F</span></div><div style="position:absolute;left:405.8px;width:63px;top:211.00px;font-size:13px;line-height:13px;text-align:center;color:#444;"><span style="display:inline-block;transform:scaleX(0.88);">G</span></div><div style="position:absolute;left:469.8px;width:63px;top:211.00px;font-size:13px;line-height:13px;text-align:center;color:#444;"><span style="display:inline-block;transform:scaleX(0.88);">H</span></div><div style="position:absolute;left:533.8px;width:63px;top:211.00px;font-size:13px;line-height:13px;text-align:center;color:#444;"><span style="display:inline-block;transform:scaleX(0.88);">I</span></div><div style="position:absolute;left:597.8px;width:63px;top:211.00px;font-size:13px;line-height:13px;text-align:center;color:#444;"><span style="display:inline-block;transform:scaleX(0.88);">J</span></div><div style="position:absolute;left:661.8px;width:63px;top:211.00px;font-size:13px;line-height:13px;text-align:center;color:#1d5735;"><span style="display:inline-block;transform:scaleX(0.88);">K</span></div><div style="position:absolute;left:725.8px;width:63px;top:211.00px;font-size:13px;line-height:13px;text-align:center;color:#444;"><span style="display:inline-block;transform:scaleX(0.88);">L</span></div><div style="position:absolute;left:789.8px;width:63px;top:211.00px;font-size:13px;line-height:13px;text-align:center;color:#444;"><span style="display:inline-block;transform:scaleX(0.88);">M</span></div><div style="position:absolute;left:853.8px;width:63px;top:211.00px;font-size:13px;line-height:13px;text-align:center;color:#444;"><span style="display:inline-block;transform:scaleX(0.88);">N</span></div><div style="position:absolute;left:917.8px;width:63px;top:211.00px;font-size:13px;line-height:13px;text-align:center;color:#444;"><span style="display:inline-block;transform:scaleX(0.88);">O</span></div><div style="position:absolute;left:981.8px;width:63px;top:211.00px;font-size:13px;line-height:13px;text-align:center;color:#444;"><span style="display:inline-block;transform:scaleX(0.88);">P</span></div><div style="position:absolute;left:1px;width:25px;top:232.72px;font-size:12.5px;line-height:12.5px;text-align:center;color:#444;">1</div><div style="position:absolute;left:1px;width:25px;top:252.72px;font-size:12.5px;line-height:12.5px;text-align:center;color:#444;">2</div><div style="position:absolute;left:1px;width:25px;top:272.72px;font-size:12.5px;line-height:12.5px;text-align:center;color:#444;">3</div><div style="position:absolute;left:1px;width:25px;top:292.72px;font-size:12.5px;line-height:12.5px;text-align:center;color:#444;">4</div><div style="position:absolute;left:1px;width:25px;top:312.72px;font-size:12.5px;line-height:12.5px;text-align:center;color:#444;">5</div><div style="position:absolute;left:1px;width:25px;top:332.72px;font-size:12.5px;line-height:12.5px;text-align:center;color:#444;">6</div><div style="position:absolute;left:1px;width:25px;top:352.72px;font-size:12.5px;line-height:12.5px;text-align:center;color:#1d5735;">7</div><div style="position:absolute;left:1px;width:25px;top:372.72px;font-size:12.5px;line-height:12.5px;text-align:center;color:#444;">8</div><div style="position:absolute;left:1px;width:25px;top:392.72px;font-size:12.5px;line-height:12.5px;text-align:center;color:#444;">9</div><div style="position:absolute;left:1px;width:25px;top:412.72px;font-size:12.5px;line-height:12.5px;text-align:center;color:#444;">10</div><div style="position:absolute;left:1px;width:25px;top:432.72px;font-size:12.5px;line-height:12.5px;text-align:center;color:#444;">11</div><div style="position:absolute;left:1px;width:25px;top:452.72px;font-size:12.5px;line-height:12.5px;text-align:center;color:#444;">12</div><div style="position:absolute;left:1px;width:25px;top:472.72px;font-size:12.5px;line-height:12.5px;text-align:center;color:#444;">13</div><div style="position:absolute;left:1px;width:25px;top:492.72px;font-size:12.5px;line-height:12.5px;text-align:center;color:#444;">14</div><div style="position:absolute;left:1px;width:25px;top:512.72px;font-size:12.5px;line-height:12.5px;text-align:center;color:#444;">15</div><div style="position:absolute;left:1px;width:25px;top:532.72px;font-size:12.5px;line-height:12.5px;text-align:center;color:#444;">16</div><div style="position:absolute;left:1073px;top:227px;width:1px;height:312px;background:#ababab;"></div><div style="position:absolute;left:27px;top:538px;width:1046px;height:1px;background:#ababab;"></div><div style="position:absolute;left:26px;top:231.60px;width:58px;overflow:hidden;font-size:13px;line-height:13px;color:#000;white-space:pre;"><span style="display:inline-block;margin-left:2.2px;transform:scaleX(1.16);transform-origin:0 0;">Identity</span></div><div style="position:absolute;left:85px;top:231.60px;width:63px;overflow:hidden;font-size:13px;line-height:13px;color:#000;white-space:pre;"><span style="display:inline-block;margin-left:1.2px;transform:scaleX(1.02);transform-origin:0 0;">User</span></div><div style="position:absolute;left:149px;top:231.60px;width:63px;overflow:hidden;font-size:13px;line-height:13px;color:#000;white-space:pre;"><span style="display:inline-block;margin-left:2.2px;transform:scaleX(0.98);transform-origin:0 0;">AccessRig</span></div><div style="position:absolute;left:213px;top:231.60px;width:63px;overflow:hidden;font-size:13px;line-height:13px;color:#000;white-space:pre;"><span style="display:inline-block;margin-left:1.2px;transform:scaleX(1.14);transform-origin:0 0;">IsInherite</span></div><div style="position:absolute;left:277px;top:231.60px;width:63px;overflow:hidden;font-size:13px;line-height:13px;color:#000;white-space:pre;"><span style="display:inline-block;margin-left:1.2px;transform:scaleX(1.04);transform-origin:0 0;">Deny</span></div><div style="position:absolute;left:341.8px;top:231.60px;font-size:13px;line-height:13px;color:#000;white-space:pre;transform:scaleX(1.08);transform-origin:0 0;">InheritanceType</div><div style="position:absolute;left:26px;top:251.60px;width:58px;overflow:hidden;font-size:13px;line-height:13px;color:#000;white-space:pre;"><span style="display:inline-block;margin-left:3.4px;transform:scaleX(1.08);transform-origin:0 0;">destek</span></div><div style="position:absolute;left:85px;top:251.60px;width:63px;overflow:hidden;font-size:13px;line-height:13px;color:#000;white-space:pre;"><span style="display:inline-block;margin-left:1.5px;transform:scaleX(1.06);transform-origin:0 0;">mustafa.k</span></div><div style="position:absolute;left:149px;top:251.60px;width:63px;overflow:hidden;font-size:13px;line-height:13px;color:#000;white-space:pre;"><span style="display:inline-block;margin-left:2.0px;transform:scaleX(1.0);transform-origin:0 0;">FullAccess</span></div><div style="position:absolute;left:213px;top:251.60px;width:63px;text-align:center;font-size:13px;line-height:13px;color:#000;white-space:pre;"><span style="display:inline-block;transform:scaleX(0.88);">FALSE</span></div><div style="position:absolute;left:277px;top:251.60px;width:63px;text-align:center;font-size:13px;line-height:13px;color:#000;white-space:pre;"><span style="display:inline-block;transform:scaleX(0.88);">FALSE</span></div><div style="position:absolute;left:341px;top:251.60px;width:63px;overflow:hidden;font-size:13px;line-height:13px;color:#000;white-space:pre;"><span style="display:inline-block;margin-left:1.5px;transform:scaleX(1.12);transform-origin:0 0;">All</span></div><div style="position:absolute;left:85px;top:271.60px;width:63px;overflow:hidden;font-size:13px;line-height:13px;color:#000;white-space:pre;"><span style="display:inline-block;margin-left:1.5px;transform:scaleX(1.03);transform-origin:0 0;">Discovery</span></div><div style="position:absolute;left:149px;top:271.60px;width:63px;overflow:hidden;font-size:13px;line-height:13px;color:#000;white-space:pre;"><span style="display:inline-block;margin-left:2.0px;transform:scaleX(1.0);transform-origin:0 0;">FullAccess</span></div><div style="position:absolute;left:213px;top:271.60px;width:63px;text-align:center;font-size:13px;line-height:13px;color:#000;white-space:pre;"><span style="display:inline-block;transform:scaleX(0.88);">FALSE</span></div><div style="position:absolute;left:277px;top:271.60px;width:63px;text-align:center;font-size:13px;line-height:13px;color:#000;white-space:pre;"><span style="display:inline-block;transform:scaleX(0.88);">FALSE</span></div><div style="position:absolute;left:341px;top:271.60px;width:63px;overflow:hidden;font-size:13px;line-height:13px;color:#000;white-space:pre;"><span style="display:inline-block;margin-left:1.5px;transform:scaleX(1.12);transform-origin:0 0;">All</span></div><div style="position:absolute;left:85px;top:291.60px;width:63px;overflow:hidden;font-size:13px;line-height:13px;color:#000;white-space:pre;"><span style="display:inline-block;margin-left:1.5px;transform:scaleX(1.06);transform-origin:0 0;">mustafa.k</span></div><div style="position:absolute;left:149px;top:291.60px;width:63px;overflow:hidden;font-size:13px;line-height:13px;color:#000;white-space:pre;"><span style="display:inline-block;margin-left:2.0px;transform:scaleX(1.0);transform-origin:0 0;">FullAccess</span></div><div style="position:absolute;left:213px;top:291.60px;width:63px;text-align:center;font-size:13px;line-height:13px;color:#000;white-space:pre;"><span style="display:inline-block;transform:scaleX(0.88);">FALSE</span></div><div style="position:absolute;left:277px;top:291.60px;width:63px;text-align:center;font-size:13px;line-height:13px;color:#000;white-space:pre;"><span style="display:inline-block;transform:scaleX(0.88);">FALSE</span></div><div style="position:absolute;left:341px;top:291.60px;width:63px;overflow:hidden;font-size:13px;line-height:13px;color:#000;white-space:pre;"><span style="display:inline-block;margin-left:1.5px;transform:scaleX(1.12);transform-origin:0 0;">All</span></div><div style="position:absolute;left:85px;top:311.60px;width:63px;overflow:hidden;font-size:13px;line-height:13px;color:#000;white-space:pre;"><span style="display:inline-block;margin-left:1.5px;transform:scaleX(1.06);transform-origin:0 0;">mustafa.k</span></div><div style="position:absolute;left:149px;top:311.60px;width:63px;overflow:hidden;font-size:13px;line-height:13px;color:#000;white-space:pre;"><span style="display:inline-block;margin-left:2.0px;transform:scaleX(1.0);transform-origin:0 0;">FullAccess</span></div><div style="position:absolute;left:213px;top:311.60px;width:63px;text-align:center;font-size:13px;line-height:13px;color:#000;white-space:pre;"><span style="display:inline-block;transform:scaleX(0.88);">FALSE</span></div><div style="position:absolute;left:277px;top:311.60px;width:63px;text-align:center;font-size:13px;line-height:13px;color:#000;white-space:pre;"><span style="display:inline-block;transform:scaleX(0.88);">FALSE</span></div><div style="position:absolute;left:341px;top:311.60px;width:63px;overflow:hidden;font-size:13px;line-height:13px;color:#000;white-space:pre;"><span style="display:inline-block;margin-left:1.5px;transform:scaleX(1.12);transform-origin:0 0;">All</span></div><div style="position:absolute;left:85px;top:331.60px;width:63px;overflow:hidden;font-size:13px;line-height:13px;color:#000;white-space:pre;"><span style="display:inline-block;margin-left:1.5px;transform:scaleX(1.06);transform-origin:0 0;">mustafa.k</span></div><div style="position:absolute;left:149px;top:331.60px;width:63px;overflow:hidden;font-size:13px;line-height:13px;color:#000;white-space:pre;"><span style="display:inline-block;margin-left:2.0px;transform:scaleX(1.0);transform-origin:0 0;">FullAccess</span></div><div style="position:absolute;left:213px;top:331.60px;width:63px;text-align:center;font-size:13px;line-height:13px;color:#000;white-space:pre;"><span style="display:inline-block;transform:scaleX(0.88);">FALSE</span></div><div style="position:absolute;left:277px;top:331.60px;width:63px;text-align:center;font-size:13px;line-height:13px;color:#000;white-space:pre;"><span style="display:inline-block;transform:scaleX(0.88);">FALSE</span></div><div style="position:absolute;left:341px;top:331.60px;width:63px;overflow:hidden;font-size:13px;line-height:13px;color:#000;white-space:pre;"><span style="display:inline-block;margin-left:1.5px;transform:scaleX(1.12);transform-origin:0 0;">All</span></div><div style="position:absolute;left:85px;top:351.60px;width:63px;overflow:hidden;font-size:13px;line-height:13px;color:#000;white-space:pre;"><span style="display:inline-block;margin-left:1.5px;transform:scaleX(1.06);transform-origin:0 0;">mustafa.k</span></div><div style="position:absolute;left:149px;top:351.60px;width:63px;overflow:hidden;font-size:13px;line-height:13px;color:#000;white-space:pre;"><span style="display:inline-block;margin-left:2.0px;transform:scaleX(1.0);transform-origin:0 0;">FullAccess</span></div><div style="position:absolute;left:213px;top:351.60px;width:63px;text-align:center;font-size:13px;line-height:13px;color:#000;white-space:pre;"><span style="display:inline-block;transform:scaleX(0.88);">FALSE</span></div><div style="position:absolute;left:277px;top:351.60px;width:63px;text-align:center;font-size:13px;line-height:13px;color:#000;white-space:pre;"><span style="display:inline-block;transform:scaleX(0.88);">FALSE</span></div><div style="position:absolute;left:341px;top:351.60px;width:63px;overflow:hidden;font-size:13px;line-height:13px;color:#000;white-space:pre;"><span style="display:inline-block;margin-left:1.5px;transform:scaleX(1.12);transform-origin:0 0;">All</span></div><div style="position:absolute;left:85px;top:371.60px;width:63px;overflow:hidden;font-size:13px;line-height:13px;color:#000;white-space:pre;"><span style="display:inline-block;margin-left:1.5px;transform:scaleX(1.06);transform-origin:0 0;">mustafa.k</span></div><div style="position:absolute;left:149px;top:371.60px;width:63px;overflow:hidden;font-size:13px;line-height:13px;color:#000;white-space:pre;"><span style="display:inline-block;margin-left:2.0px;transform:scaleX(1.0);transform-origin:0 0;">FullAccess</span></div><div style="position:absolute;left:213px;top:371.60px;width:63px;text-align:center;font-size:13px;line-height:13px;color:#000;white-space:pre;"><span style="display:inline-block;transform:scaleX(0.88);">FALSE</span></div><div style="position:absolute;left:277px;top:371.60px;width:63px;text-align:center;font-size:13px;line-height:13px;color:#000;white-space:pre;"><span style="display:inline-block;transform:scaleX(0.88);">FALSE</span></div><div style="position:absolute;left:341px;top:371.60px;width:63px;overflow:hidden;font-size:13px;line-height:13px;color:#000;white-space:pre;"><span style="display:inline-block;margin-left:1.5px;transform:scaleX(1.12);transform-origin:0 0;">All</span></div><div style="position:absolute;left:85px;top:391.60px;width:63px;overflow:hidden;font-size:13px;line-height:13px;color:#000;white-space:pre;"><span style="display:inline-block;margin-left:1.5px;transform:scaleX(1.06);transform-origin:0 0;">mustafa.k</span></div><div style="position:absolute;left:149px;top:391.60px;width:63px;overflow:hidden;font-size:13px;line-height:13px;color:#000;white-space:pre;"><span style="display:inline-block;margin-left:2.0px;transform:scaleX(1.0);transform-origin:0 0;">FullAccess</span></div><div style="position:absolute;left:213px;top:391.60px;width:63px;text-align:center;font-size:13px;line-height:13px;color:#000;white-space:pre;"><span style="display:inline-block;transform:scaleX(0.88);">FALSE</span></div><div style="position:absolute;left:277px;top:391.60px;width:63px;text-align:center;font-size:13px;line-height:13px;color:#000;white-space:pre;"><span style="display:inline-block;transform:scaleX(0.88);">FALSE</span></div><div style="position:absolute;left:341px;top:391.60px;width:63px;overflow:hidden;font-size:13px;line-height:13px;color:#000;white-space:pre;"><span style="display:inline-block;margin-left:1.5px;transform:scaleX(1.12);transform-origin:0 0;">All</span></div><div style="position:absolute;left:85px;top:411.60px;width:63px;overflow:hidden;font-size:13px;line-height:13px;color:#000;white-space:pre;"><span style="display:inline-block;margin-left:1.5px;transform:scaleX(1.06);transform-origin:0 0;">mustafa.k</span></div><div style="position:absolute;left:149px;top:411.60px;width:63px;overflow:hidden;font-size:13px;line-height:13px;color:#000;white-space:pre;"><span style="display:inline-block;margin-left:2.0px;transform:scaleX(1.0);transform-origin:0 0;">FullAccess</span></div><div style="position:absolute;left:213px;top:411.60px;width:63px;text-align:center;font-size:13px;line-height:13px;color:#000;white-space:pre;"><span style="display:inline-block;transform:scaleX(0.88);">FALSE</span></div><div style="position:absolute;left:277px;top:411.60px;width:63px;text-align:center;font-size:13px;line-height:13px;color:#000;white-space:pre;"><span style="display:inline-block;transform:scaleX(0.88);">FALSE</span></div><div style="position:absolute;left:341px;top:411.60px;width:63px;overflow:hidden;font-size:13px;line-height:13px;color:#000;white-space:pre;"><span style="display:inline-block;margin-left:1.5px;transform:scaleX(1.12);transform-origin:0 0;">All</span></div><div style="position:absolute;left:85px;top:431.60px;width:63px;overflow:hidden;font-size:13px;line-height:13px;color:#000;white-space:pre;"><span style="display:inline-block;margin-left:1.5px;transform:scaleX(1.06);transform-origin:0 0;">mustafa.k</span></div><div style="position:absolute;left:149px;top:431.60px;width:63px;overflow:hidden;font-size:13px;line-height:13px;color:#000;white-space:pre;"><span style="display:inline-block;margin-left:2.0px;transform:scaleX(1.0);transform-origin:0 0;">FullAccess</span></div><div style="position:absolute;left:213px;top:431.60px;width:63px;text-align:center;font-size:13px;line-height:13px;color:#000;white-space:pre;"><span style="display:inline-block;transform:scaleX(0.88);">FALSE</span></div><div style="position:absolute;left:277px;top:431.60px;width:63px;text-align:center;font-size:13px;line-height:13px;color:#000;white-space:pre;"><span style="display:inline-block;transform:scaleX(0.88);">FALSE</span></div><div style="position:absolute;left:341px;top:431.60px;width:63px;overflow:hidden;font-size:13px;line-height:13px;color:#000;white-space:pre;"><span style="display:inline-block;margin-left:1.5px;transform:scaleX(1.12);transform-origin:0 0;">All</span></div><div style="position:absolute;left:27px;top:268px;width:58px;height:180px;background:#000;"></div><div style="position:absolute;left:659px;top:346px;width:67px;height:23px;border:2px solid #217346;box-sizing:border-box;"></div><div style="position:absolute;left:722px;top:365px;width:5px;height:5px;background:#217346;outline:1px solid #fff;"></div><div style="position:absolute;left:1074px;top:208px;width:21px;height:331px;background:#e6e6e6;"></div><div style="position:absolute;left:1077px;top:210px;width:15px;height:15px;background:#fff;border:1px solid #ababab;box-sizing:border-box;"></div><svg style="position:absolute;left:1080px;top:214px;" width="9" height="6" viewBox="0 0 9 6"><path d="M0.5,5 L4.5,0.5 L8.5,5 Z" fill="#605e5c"/></svg><div style="position:absolute;left:1077px;top:449px;width:15px;height:75px;background:#d9d9d9;"></div><div style="position:absolute;left:1077px;top:225px;width:15px;height:224px;background:#fff;border:1px solid #ababab;box-sizing:border-box;"></div><div style="position:absolute;left:1077px;top:524px;width:15px;height:15px;background:#fff;border:1px solid #ababab;box-sizing:border-box;"></div><svg style="position:absolute;left:1080px;top:529px;" width="9" height="6" viewBox="0 0 9 6"><path d="M0.5,0.5 L4.5,5 L8.5,0.5 Z" fill="#605e5c"/></svg><div style="position:absolute;left:1px;top:538px;width:1094px;height:28px;background:#e6e6e6;"></div><div style="position:absolute;left:1px;top:538px;width:1072px;height:1px;background:#ababab;"></div><svg style="position:absolute;left:27px;top:547px;" width="6" height="9" viewBox="0 0 6 9"><path d="M5,0.5 V8.5 L0.5,4.5 Z" fill="#c8c6c4"/></svg><svg style="position:absolute;left:56px;top:547px;" width="6" height="9" viewBox="0 0 6 9"><path d="M0.5,0.5 V8.5 L5,4.5 Z" fill="#c8c6c4"/></svg><div style="position:absolute;left:101px;top:538px;width:124px;height:25px;background:#fff;border-left:1px solid #ababab;border-right:1px solid #ababab;box-sizing:border-box;"></div><div style="position:absolute;left:101px;top:561px;width:124px;height:2px;background:#217346;"></div><div style="position:absolute;left:113.5px;top:545.84px;font-size:12px;line-height:12px;color:#217346;font-weight:700;white-space:pre;">FullAccessPerms</div><svg style="position:absolute;left:258px;top:544px;" width="18" height="18" viewBox="0 0 18 18"><circle cx="8.8" cy="8.3" r="7.6" fill="none" stroke="#605e5c" stroke-width="1.2"/><path d="M8.8,4 V12.6 M4.5,8.3 H13.1" stroke="#605e5c" stroke-width="1.4"/></svg><div style="position:absolute;left:1px;top:566px;width:1094px;height:1px;background:#c6c6c6;"></div><svg style="position:absolute;left:656px;top:546px;" width="4" height="12" viewBox="0 0 4 12"><rect x="1" y="1" width="2" height="2" fill="#a6a6a6"/><rect x="1" y="5" width="2" height="2" fill="#a6a6a6"/><rect x="1" y="9" width="2" height="2" fill="#a6a6a6"/></svg><div style="position:absolute;left:689px;top:545px;width:370px;height:15px;background:#d9d9d9;"></div><div style="position:absolute;left:674px;top:545px;width:16px;height:15px;background:#fff;border:1px solid #ababab;box-sizing:border-box;"></div><svg style="position:absolute;left:678px;top:548px;" width="6" height="9" viewBox="0 0 6 9"><path d="M5,0.5 V8.5 L0.5,4.5 Z" fill="#605e5c"/></svg><div style="position:absolute;left:689px;top:545px;width:346px;height:15px;background:#fff;border:1px solid #ababab;box-sizing:border-box;"></div><div style="position:absolute;left:1059px;top:545px;width:15px;height:15px;background:#fff;border:1px solid #ababab;box-sizing:border-box;"></div><svg style="position:absolute;left:1064px;top:548px;" width="6" height="9" viewBox="0 0 6 9"><path d="M0.5,0.5 V8.5 L5,4.5 Z" fill="#605e5c"/></svg><div style="position:absolute;left:1px;top:567px;width:1094px;height:21px;background:#f3f2f1;"></div><div style="position:absolute;left:784px;top:567px;width:40px;height:21px;background:#c8c6c4;"></div><svg style="position:absolute;left:797px;top:570px;" width="14" height="14" viewBox="0 0 14 14"><g shape-rendering="crispEdges" fill="#262626"><rect x="0" y="0" width="13" height="1.3"/><rect x="0" y="4" width="13" height="1.3"/><rect x="0" y="8" width="13" height="1.3"/><rect x="0" y="11.7" width="13" height="1.3"/><rect x="0" y="0" width="1.3" height="13"/><rect x="4" y="0" width="1.3" height="13"/><rect x="8" y="0" width="1.3" height="13"/><rect x="11.7" y="0" width="1.3" height="13"/></g><g fill="#dcdcdc"><rect x="1.3" y="1.3" width="2.7" height="2.7"/><rect x="5.3" y="1.3" width="2.7" height="2.7"/><rect x="9.3" y="1.3" width="2.4" height="2.7"/><rect x="1.3" y="5.3" width="2.7" height="2.7"/><rect x="5.3" y="5.3" width="2.7" height="2.7"/><rect x="9.3" y="5.3" width="2.4" height="2.7"/><rect x="1.3" y="9.3" width="2.7" height="2.4"/><rect x="5.3" y="9.3" width="2.7" height="2.4"/><rect x="9.3" y="9.3" width="2.4" height="2.4"/></g></svg><svg style="position:absolute;left:837px;top:570px;" width="15" height="14" viewBox="0 0 15 14"><g fill="none" stroke="#3b3a39" stroke-width="1" shape-rendering="crispEdges"><rect x="0.5" y="0.5" width="13" height="12"/><rect x="3.5" y="2.5" width="7" height="8"/></g><g fill="#3b3a39"><rect x="5" y="4" width="4" height="1"/><rect x="5" y="6" width="4" height="1"/><rect x="5" y="8" width="4" height="1"/></g></svg><svg style="position:absolute;left:877px;top:570px;" width="15" height="14" viewBox="0 0 15 14"><g fill="none" stroke="#3b3a39" stroke-width="1" shape-rendering="crispEdges"><rect x="0.5" y="0.5" width="13" height="12"/><path d="M0.5,7.5 H9.5 V0.5 M3.5,0.5 V7.5 M6.5,0.5 V7.5"/></g></svg><div style="position:absolute;left:909px;top:576px;width:9px;height:1px;background:#444;"></div><div style="position:absolute;left:923px;top:576px;width:99px;height:1px;background:#a6a6a6;"></div><div style="position:absolute;left:971px;top:572px;width:5px;height:10px;background:#7a7a7a;"></div><svg style="position:absolute;left:1026px;top:571px;" width="11" height="11" viewBox="0 0 11 11"><path d="M5.5,1 V10 M1,5.5 H10" stroke="#444" stroke-width="1.1"/></svg><div style="position:absolute;left:1049.5px;top:571.27px;font-size:11.5px;line-height:11.5px;color:#444;font-weight:400;white-space:pre;transform:scaleX(0.89);transform-origin:0 0;">100%</div><div style="position:absolute;left:0px;top:35px;width:1px;height:554px;background:#217346;"></div><div style="position:absolute;left:1095px;top:35px;width:1px;height:554px;background:#217346;"></div><div style="position:absolute;left:0px;top:588px;width:1096px;height:1px;background:#217346;"></div>
</body></html>
